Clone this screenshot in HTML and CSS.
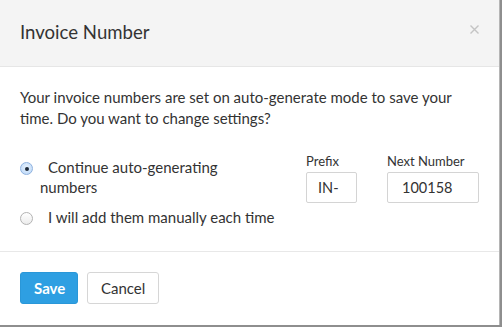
FILE: index.html
```html
<!DOCTYPE html>
<html>
<head>
<meta charset="utf-8">
<link rel="stylesheet" href="styles.css">
</head>
<body>
<div class="dialog">
  <div class="header">
    <h1 class="title">Invoice Number</h1>
    <svg class="close" width="9" height="9" viewBox="0 0 9 9"><path d="M0.5 0.5L8.5 8.5M8.5 0.5L0.5 8.5" stroke="#c4c4c4" stroke-width="1.4" fill="none"/></svg>
  </div>
  <div class="body">
    <p class="intro">Your invoice numbers are set on auto-generate mode to save your time. Do you want to change settings?</p>
    <div class="row">
      <div class="option first">
        <span class="radio checked"></span>
        <span class="label">Continue auto-generating numbers</span>
      </div>
      <div class="field prefix">
        <div class="field-label">Prefix</div>
        <div class="input">IN-</div>
      </div>
      <div class="field next">
        <div class="field-label">Next Number</div>
        <div class="input">100158</div>
      </div>
    </div>
    <div class="option second">
      <span class="radio"></span>
      <span class="label">I will add them manually each time</span>
    </div>
  </div>
  <div class="footer">
    <button class="btn primary">Save</button>
    <button class="btn">Cancel</button>
  </div>
</div>
</body>
</html>
```

FILE: styles.css
```css
html, body {
  margin: 0;
  padding: 0;
}
body {
  width: 502px;
  height: 327px;
  background: #8e8e8e;
  font-family: Lato, "Open Sans", sans-serif;
  color: #333;
  overflow: hidden;
}
.dialog {
  width: 499px;
  height: 325px;
  background: #fff;
  display: flex;
  flex-direction: column;
  box-shadow: 1px 0 0 #b5b5b5;
}
.header {
  background: #f4f4f4;
  border-bottom: 1px solid #e6e6e6;
  padding: 20px 20px 22px 20px;
  display: flex;
  justify-content: space-between;
  align-items: flex-start;
}
.title {
  margin: 0;
  font-size: 18.6px;
  font-weight: 400;
  line-height: 24px;
  color: #333;
}
.close {
  margin-top: 5px;
  display: block;
}
.body {
  padding: 20px 20px 0 20px;
  height: 164px;
  border-bottom: 1px solid #e8e8e8;
}
.intro {
  margin: 0;
  font-size: 15px;
  line-height: 21px;
}
.row {
  display: flex;
  margin-top: 24px;
  align-items: flex-start;
}
.option {
  display: flex;
  align-items: flex-start;
  font-size: 15px;
  line-height: 20px;
}
.option.first {
  width: 230px;
  padding-top: 4px;
  margin-right: 56px;
}
.option.second {
  margin-top: 4px;
}
.label {
  flex: 1;
  padding-left: 7px;
  text-indent: 8px;
}
.radio {
  flex: none;
  width: 11px;
  height: 11px;
  margin-top: 5px;
  border: 1px solid #b3b3b3;
  border-radius: 50%;
  background: linear-gradient(#ffffff, #ececec);
  display: flex;
  align-items: center;
  justify-content: center;
}
.radio.checked {
  border-color: #8fb2df;
  background: radial-gradient(circle at 50% 40%, #e6f1fd, #b9d6f7);
}
.radio.checked::after {
  content: "";
  width: 4px;
  height: 4px;
  border-radius: 50%;
  background: #1d2a3a;
}
.field-label {
  font-size: 13px;
  line-height: 16px;
  margin-bottom: 3px;
  color: #333;
}
.input {
  box-sizing: border-box;
  height: 31px;
  border: 1px solid #d4d4d4;
  border-radius: 2px;
  font-size: 14.5px;
  line-height: 29px;
  padding-left: 11px;
  color: #333;
}
.prefix .input {
  width: 51px;
}
.field.prefix {
  margin-right: 30px;
}
.next .input {
  width: 92px;
  padding-left: 14px;
}
.footer {
  padding: 20px;
  display: flex;
  gap: 9px;
}
.btn {
  box-sizing: border-box;
  height: 32px;
  padding: 0 13px;
  border: 1px solid #d6d6d6;
  border-radius: 3px;
  background: #fff;
  font-family: Lato, "Open Sans", sans-serif;
  font-size: 15px;
  color: #333;
  width: 72px;
}
.btn.primary {
  width: 58px;
  background: #2e9fe2;
  border-color: #2a97d8;
  color: #fff;
  font-weight: 700;
}
```
